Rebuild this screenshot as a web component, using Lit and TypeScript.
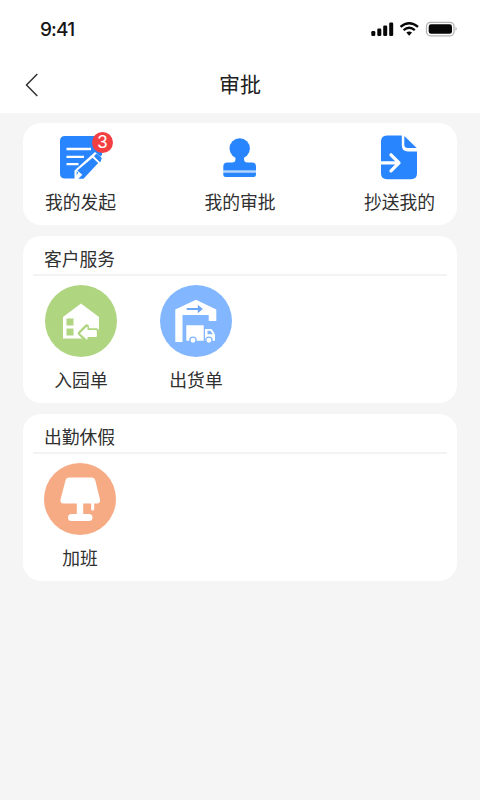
import { LitElement, html, css, svg } from "lit";
import { customElement } from "lit/decorators.js";

const icons = {
  started: svg`<svg class="glyph" viewBox="0 0 54 54" width="54" height="54">
    <path d="M5 6H42V25L19 48.500H5Q0 48.500 0 43.500V11Q0 6 5 6Z" fill="#2885fe"/>
    <path d="M6.500 19H31M6.500 26.800H24M6.500 34.200H18.500" stroke="#fff" stroke-width="2.300"/>
    <path d="M35 22L44 29.500L25 51L14.500 52L14.500 40.500Z" fill="#fff"/>
    <path d="M36.500 24L41.300 28L40 31.800L34.500 26.300Z" fill="#2885fe" stroke="#2885fe" stroke-linejoin="round"/>
    <path d="M32.600 27.800L38.200 33L23.500 48.700H18.300L22.300 44.800L17.300 40.500Z" fill="#2885fe"/>
    <path d="M16.800 41.300L18.200 42.500L16.500 45.500Z" fill="#2885fe"/>
  </svg>`,
  stamp: svg`<svg class="glyph stamp" viewBox="0 0 54 54" width="54" height="54">
    <circle cx="26.700" cy="18.500" r="10.200" fill="#2885fe"/>
    <path d="M22.500 26H31V29Q31 32.500 34.500 32.500H39Q43 32.500 43 36.500V40.700H10.300V36.500Q10.300 32.500 14.300 32.500H19Q22.500 32.500 22.500 29Z" fill="#2885fe"/>
    <path d="M10.300 40.500H43V43H10.300Z" fill="#b5d5ff"/>
    <path d="M10.300 42.700H43V44.500Q43 47 40.500 47H12.800Q10.300 47 10.300 44.500Z" fill="#2885fe"/>
  </svg>`,
  copied: svg`<svg class="glyph copied" viewBox="0 0 54 54" width="54" height="54">
    <path d="M19 5.500H33.800V15Q33.800 21.500 40 21.500H49V43.500Q49 49.200 43 49.200H19Q13 49.200 13 43.500V11.500Q13 5.500 19 5.500Z" fill="#2885fe"/>
    <path d="M36.300 6L48.700 18H40Q36.300 18 36.300 14.500Z" fill="#2885fe"/>
    <path d="M13 32.800H29M23 24.800L31 32.800L23 40.800" fill="none" stroke="#fff" stroke-width="3.300" stroke-linecap="round" stroke-linejoin="round"/>
  </svg>`,
  house: svg`<svg class="disc" viewBox="0 0 72 72" width="72" height="72">
    <circle cx="36" cy="36" r="36" fill="#afd580"/>
    <path d="M18 32L36 18.500L54 32V45H46V53.500H18Z" fill="#fff"/>
    <path d="M21.500 33.500H28.500V40.500H21.500ZM21.500 43.500H28.500V50.500H21.500Z" fill="#afd580"/>
    <path d="M35 48.300L41.700 41.700V45.500H51.500V51.700H41.700V54.500Z" fill="#afd580" stroke="#afd580" stroke-width="4.500" stroke-linejoin="round"/>
    <path d="M35.500 48.300L42 42V45.500H51.300V51.500H42V54.300Z" fill="#fff" stroke="#fff" stroke-width="1" stroke-linejoin="round"/>
  </svg>`,
  truck: svg`<svg class="disc" viewBox="0 0 72 72" width="72" height="72">
    <circle cx="36" cy="36" r="36" fill="#82b6ff"/>
    <path d="M15.300 24.500L36 14.700L56.300 24.500V36H48.700V30H22.500V57H15.300Z" fill="#fff"/>
    <path d="M26.700 24H39" stroke="#6da6f5" stroke-width="2"/>
    <path d="M37.800 19.800L42.800 24L37.800 28.200Z" fill="#6da6f5"/>
    <path d="M26.300 40.300H43.700V55.800H26.300ZM45 44H50.500Q52 44 53 46L55 49.500V55.800H45Z" fill="#fff"/>
    <path d="M47.500 45.800H50.500L52.800 49.300H47.500Z" fill="#82b6ff"/>
    <g fill="#fff" stroke="#82b6ff" stroke-width="1.300"><circle cx="33" cy="55.200" r="3.100"/><circle cx="48.900" cy="55.200" r="3.100"/></g>
  </svg>`,
  lamp: svg`<svg class="disc" viewBox="0 0 72 72" width="72" height="72">
    <circle cx="36" cy="36" r="36" fill="#f7ab84"/>
    <path d="M25.500 14.500H47.500Q50.500 14.500 51.300 17.500L56 36.500Q56.500 40.500 53 40.500H19.500Q16 40.500 16.500 36.500L21.500 17.500Q22.300 14.500 25.500 14.500Z" fill="#fff"/>
    <path d="M32.800 39H39.200V51H45Q48.500 51 48.500 54.500Q48.500 58 45 58H27.500Q24 58 24 54.500Q24 51 27.500 51H32.800Z" fill="#fff"/>
    <path d="M48.700 40V46" stroke="#fff" stroke-width="3" stroke-linecap="round"/>
  </svg>`,
};

@customElement("app-root")
export class AppRoot extends LitElement {
  static styles = css`
    :host {
      display: block;
      min-height: 800px;
      background: #f5f5f5;
      color: #303030;
      font-family: "Liberation Sans", "Noto Sans CJK SC", sans-serif;
      font-size: 17.800px;
      line-height: 26px;
    }
    * { box-sizing: border-box; }
    svg { display: block; }
    header { height: 113px; background: #fff; }
    .status {
      display: flex;
      align-items: center;
      justify-content: space-between;
      height: 57px;
      padding: 0 22px 0 40px;
    }
    .time {
      padding-top: 2px;
      font: 500 19px/24px Inter, sans-serif;
      letter-spacing: -0.850px;
      color: #151515;
    }
    .nav {
      display: grid;
      grid-template-columns: 70px 1fr 70px;
      height: 56px;
      align-items: center;
    }
    .back { margin-left: 24px; }
    h1 {
      margin: 0;
      font-size: 21px;
      line-height: 30px;
      font-weight: 400;
      text-align: center;
      color: #202020;
    }
    main {
      display: flex;
      flex-direction: column;
      gap: 11px;
      padding: 10px 23px;
    }
    .card { border-radius: 18px; background: #fff; }
    .shortcuts {
      display: flex;
      justify-content: space-between;
      height: 102px;
      padding: 7px 22px 0;
    }
    .shortcut { position: relative; width: 71px; }
    .glyph { margin: 0 0 6px 15px; }
    .glyph.stamp { margin-left: 8px; }
    .glyph.copied { margin-left: 4px; }
    .shortcut span { display: block; white-space: nowrap; }
    .shortcut .badge {
      position: absolute;
      left: 47px;
      top: 2px;
      width: 21px;
      height: 21px;
      border-radius: 50%;
      background: #f43f42;
      color: #fff;
      font-size: 18px;
      line-height: 21px;
      text-align: center;
    }
    .group { height: 167px; padding: 10px 10px 0; }
    h2 {
      margin: 0;
      height: 30px;
      padding: 1px 0 0 11px;
      border-bottom: 2px solid #f3f3f3;
      font-size: 17.800px;
      line-height: 26px;
      font-weight: 400;
    }
    .apps { display: flex; gap: 43px; padding: 9px 0 0 12px; }
    .app { width: 72px; text-align: center; }
    .disc { margin-bottom: 11px; }
    .leave { padding-left: 11px; }
  `;

  private shortcut(icon: unknown, label: string, count = 0) {
    return html`<div class="shortcut">
      ${icon}<span>${label}</span>
      ${count ? html`<span class="badge">${count}</span>` : ""}
    </div>`;
  }

  private app(icon: unknown, label: string) {
    return html`<div class="app">${icon}<div>${label}</div></div>`;
  }

  render() {
    return html`
      <header>
        <div class="status">
          <span class="time">9:41</span>
          <svg viewBox="0 0 88 18" width="88" height="18">
            <g fill="#080808">
              <rect x="1.300" y="11" width="4" height="5" rx="1.200"/>
              <rect x="7.300" y="8.500" width="4" height="7.500" rx="1.200"/>
              <rect x="13.200" y="5.500" width="4" height="10.500" rx="1.200"/>
              <rect x="19.200" y="2.500" width="4" height="13.500" rx="1.200"/>
              <path d="M36.300 12.500Q39.200 10.700 42 12.500L39.200 15.800Z"/>
            </g>
            <path d="M30.500 6.800Q39.200 -0.500 48 6.800M33.600 10.200Q39.200 5.500 44.800 10.200" fill="none" stroke="#080808" stroke-width="2.400"/>
            <rect x="56.500" y="2.300" width="27.500" height="13.500" rx="4" fill="#fff" stroke="#b4b4b4" stroke-width="1.300"/>
            <rect x="58.700" y="4.300" width="23.300" height="9.500" rx="2.400" fill="#080808"/>
            <path d="M85.500 6.800Q88 8.800 85.500 11Z" fill="#aaa"/>
          </svg>
        </div>
        <div class="nav">
          <svg class="back" viewBox="0 0 16 26" width="16" height="26">
            <path d="M13.300 2L2.500 13L13.300 24" fill="none" stroke="#333" stroke-width="1.500"/>
          </svg>
          <h1>审批</h1>
        </div>
      </header>
      <main>
        <section class="card shortcuts">
          ${this.shortcut(icons.started, "我的发起", 3)}
          ${this.shortcut(icons.stamp, "我的审批")}
          ${this.shortcut(icons.copied, "抄送我的")}
        </section>
        <section class="card group">
          <h2>客户服务</h2>
          <div class="apps">${this.app(icons.house, "入园单")}${this.app(icons.truck, "出货单")}</div>
        </section>
        <section class="card group">
          <h2>出勤休假</h2>
          <div class="apps leave">${this.app(icons.lamp, "加班")}</div>
        </section>
      </main>
    `;
  }
}
